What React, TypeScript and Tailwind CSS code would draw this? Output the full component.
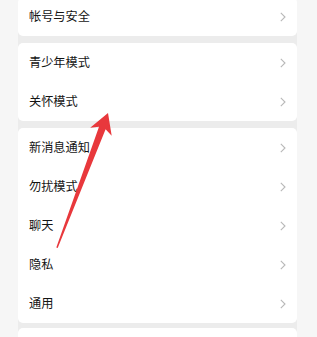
const groups: string[][] = [
  ['帐号与安全'],
  ['青少年模式', '关怀模式'],
  ['新消息通知', '勿扰模式', '聊天', '隐私', '通用'],
  [''],
];

function Chevron() {
  return (
    <svg width="6" height="10" viewBox="0 0 6 10" className="shrink-0">
      <path d="M0.8 0.8 L5 5 L0.8 9.2" fill="none" stroke="#b8b8b8" strokeWidth="1.1" />
    </svg>
  );
}

function Row({ label }: { label: string }) {
  return (
    <div className="h-[39px] flex items-center justify-between pl-[11px] pr-[11px]">
      <span className="text-[12.2px] text-[#141414] leading-none">{label}</span>
      <Chevron />
    </div>
  );
}

export default function App() {
  const gaps = ['-mt-[3px]', 'mt-[7px]', 'mt-[7px]', 'mt-[5px]'];
  return (
    <div
      className="relative w-[317px] h-[337px] overflow-hidden bg-[#f6f6f6]"
      style={{ fontFamily: '"Noto Sans CJK SC", "Noto Sans", sans-serif' }}
    >
      <div className="ml-[18px] w-[279px] bg-[#ececec] flex flex-col">
        {groups.map((g, i) => (
          <div key={i} className={`bg-white rounded-[5px] ${gaps[i]}`}>
            {g.map((label, j) =>
              label ? <Row key={j} label={label} /> : <div key={j} className="h-[39px]" />
            )}
          </div>
        ))}
      </div>
      <svg className="absolute left-0 top-0" width="317" height="337" viewBox="0 0 317 337">
        <polygon
          points="108,113 111.7,135.8 105.6,129.2 57.7,248.1 56.3,247.5 99,126.7 90.2,127.7"
          fill="#e8383c"
        />
      </svg>
    </div>
  );
}
